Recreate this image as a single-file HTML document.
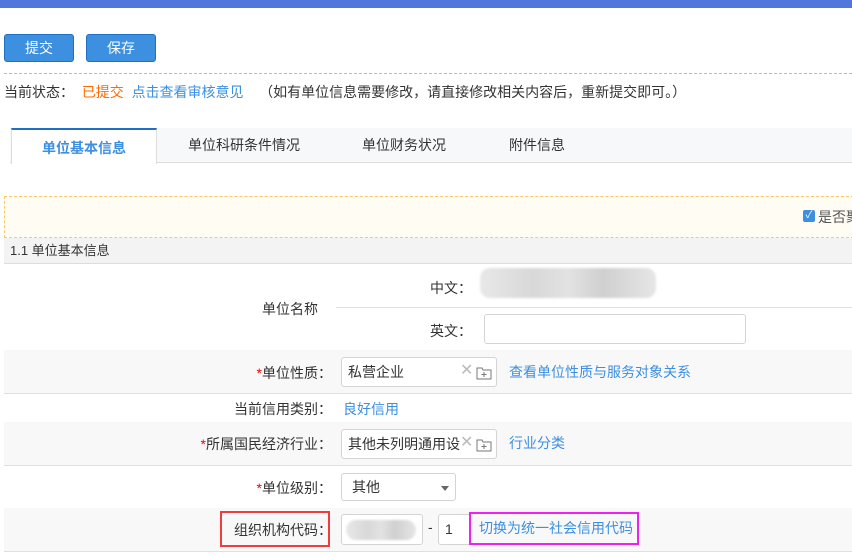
<!DOCTYPE html>
<html><head><meta charset="utf-8"><style>
*{margin:0;padding:0;box-sizing:border-box}
body{width:852px;height:556px;overflow:hidden;background:#fff;font-family:"Liberation Sans","Noto Sans CJK SC",sans-serif;font-size:14px;color:#333;position:relative}
.a{position:absolute}
.btn{background:#3d8fe0;border:1px solid #1f6fc4;border-radius:3px;color:#fff;font-size:14px;text-align:center;line-height:26px;height:28px;width:70px;top:34px}
.lnk{color:#3d8fe0}
.row{position:absolute;left:4px;width:848px;border-bottom:1px solid #e0e0e0}
.lbl{position:absolute;right:520px;text-align:right;white-space:nowrap;font-size:14px}
.req{color:#e00}
.inp{position:absolute;border:1px solid #d4d4d4;border-radius:3px;background:#fff;height:30px}
.blur{background:linear-gradient(90deg,#e8e8e8,#d8d8d8 30%,#e2e2e2 50%,#d0d0d0 70%,#e6e6e6);border-radius:10px;filter:blur(1px)}
</style></head><body>
<div class="a" style="left:0;top:0;width:852px;height:8px;background:#5177dc"></div>
<div class="a btn" style="left:4px">提交</div>
<div class="a btn" style="left:86px">保存</div>
<div class="a" style="left:4px;top:73px;width:848px;border-top:1px dashed #bbb"></div>
<div class="a" style="left:4px;top:82px;white-space:nowrap;line-height:20px">当前状态：&nbsp; <span style="color:#ff6a00">已提交</span>&nbsp; <span class="lnk">点击查看审核意见</span> &nbsp;&nbsp; （如有单位信息需要修改，请直接修改相关内容后，重新提交即可。）</div>
<div class="a" style="left:10px;top:128px;width:842px;height:35px;background:#f7f8fa;border-bottom:1px solid #ddd"></div>
<div class="a" style="left:11px;top:128px;width:146px;height:36px;background:#fff;border-top:2px solid #1f6fc4;border-left:1px solid #ddd;border-right:1px solid #ddd;color:#3d8fe0;font-weight:bold;text-align:center;line-height:36px">单位基本信息</div>
<div class="a" style="left:188px;top:128px;line-height:35px">单位科研条件情况</div>
<div class="a" style="left:362px;top:128px;line-height:35px">单位财务状况</div>
<div class="a" style="left:509px;top:128px;line-height:35px">附件信息</div>
<div class="a" style="left:4px;top:196px;width:850px;height:42px;background:#fffcf3;border:1px dashed #f6c96a;border-right:none"></div>
<div class="a" style="left:803px;top:210px;width:12px;height:12px;background:#3d8fe0;border-radius:2px;color:#fff;font-size:10px;line-height:12px;text-align:center">✓</div>
<div class="a" style="left:818px;top:207px;white-space:nowrap;color:#555">是否聚</div>
<div class="a" style="left:4px;top:238px;width:848px;height:26px;background:#f3f3f3;border-bottom:1px solid #ddd;padding-left:6px;line-height:25px;font-size:13px">1.1 单位基本信息</div>
<div class="row" style="top:264px;height:87px"></div>
<div class="a" style="left:262px;top:299px">单位名称</div>
<div class="a" style="left:336px;top:307px;width:516px;border-top:1px solid #e0e0e0"></div>
<div class="a" style="left:430px;top:278px">中文：</div>
<div class="a blur" style="left:480px;top:268px;width:176px;height:30px"></div>
<div class="a" style="left:430px;top:321px">英文：</div>
<div class="inp" style="left:484px;top:314px;width:262px"></div>
<div class="row" style="top:350px;height:44px;background:#f8f8f8"></div>
<div class="lbl" style="top:363px"><span class="req">*</span>单位性质：</div>
<div class="inp" style="left:341px;top:357px;width:156px;padding:6px;line-height:17px">私营企业<span class="a" style="left:118px;top:4px;color:#bbb;font-size:16px">✕</span><svg class="a" style="left:134px;top:8px" width="16" height="14" viewBox="0 0 16 14"><path d="M1 2h5l1 2h8v9H1z" fill="none" stroke="#777"/><path d="M8 6v5M5.5 8.5h5" stroke="#777"/></svg></div>
<div class="a lnk" style="left:509px;top:362px">查看单位性质与服务对象关系</div>
<div class="row" style="top:393px;height:30px"></div>
<div class="lbl" style="top:399px">当前信用类别：</div>
<div class="a lnk" style="left:343px;top:399px">良好信用</div>
<div class="row" style="top:422px;height:44px;background:#f8f8f8"></div>
<div class="lbl" style="top:434px"><span class="req">*</span>所属国民经济行业：</div>
<div class="inp" style="left:341px;top:429px;width:156px;padding:6px;line-height:17px;overflow:hidden;white-space:nowrap">其他未列明通用设<span class="a" style="left:118px;top:4px;color:#bbb;font-size:16px;background:#fff">✕</span><svg class="a" style="left:134px;top:8px;background:#fff" width="16" height="14" viewBox="0 0 16 14"><path d="M1 2h5l1 2h8v9H1z" fill="none" stroke="#777"/><path d="M8 6v5M5.5 8.5h5" stroke="#777"/></svg></div>
<div class="a lnk" style="left:509px;top:433px">行业分类</div>
<div class="row" style="top:465px;height:44px"></div>
<div class="lbl" style="top:478px"><span class="req">*</span>单位级别：</div>
<div class="inp" style="left:341px;top:473px;width:115px;height:28px;padding:5px 10px;line-height:16px">其他<span class="a" style="left:99px;top:12px;border:4px solid transparent;border-top:5px solid #666"></span></div>
<div class="row" style="top:508px;height:44px;background:#f8f8f8"></div>
<div class="lbl" style="top:520px">组织机构代码：</div>
<div class="a" style="left:220px;top:511px;width:110px;height:36px;border:2px solid #f03c3c"></div>
<div class="inp" style="left:341px;top:514px;width:82px;height:31px"><div class="a blur" style="left:4px;top:5px;width:70px;height:20px"></div></div>
<div class="a" style="left:428px;top:519px">-</div>
<div class="inp" style="left:438px;top:514px;width:34px;height:31px;padding:6px;line-height:17px">1</div>
<div class="a" style="left:469px;top:512px;width:170px;height:33px;border:2px solid #ee22ee;background:#f8f8f8;color:#3d8fe0;padding-left:8px;line-height:29px;white-space:nowrap">切换为统一社会信用代码</div>
</body></html>
